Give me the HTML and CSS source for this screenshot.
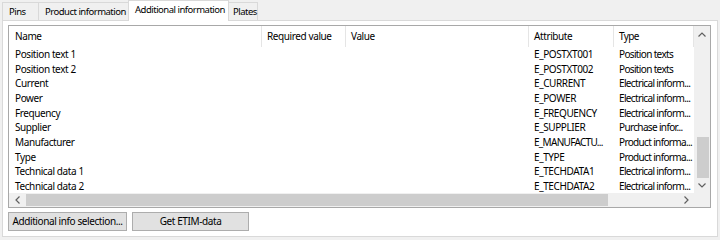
FILE: index.html
```html
<!DOCTYPE html>
<html>
<head>
<meta charset="utf-8">
<link rel="stylesheet" href="styles.css">
</head>
<body>
<div class="tabs">
  <div class="tab t1">Pins</div>
  <div class="tab t2">Product information</div>
  <div class="tab t3 active">Additional information</div>
  <div class="tab t4 last">Plates</div>
</div>
<div class="panel">
  <div class="list">
    <div class="viewport">
      <div class="row header">
        <div class="c c1">Name</div>
        <div class="c c2">Required value</div>
        <div class="c c3">Value</div>
        <div class="c c4">Attribute</div>
        <div class="c c5">Type</div>
      </div>
      <div class="row"><div class="c c1">Position text 1</div><div class="c c2"></div><div class="c c3"></div><div class="c c4">E_POSTXT001</div><div class="c c5">Position texts</div></div>
      <div class="row"><div class="c c1">Position text 2</div><div class="c c2"></div><div class="c c3"></div><div class="c c4">E_POSTXT002</div><div class="c c5">Position texts</div></div>
      <div class="row"><div class="c c1">Current</div><div class="c c2"></div><div class="c c3"></div><div class="c c4">E_CURRENT</div><div class="c c5">Electrical inform...</div></div>
      <div class="row"><div class="c c1">Power</div><div class="c c2"></div><div class="c c3"></div><div class="c c4">E_POWER</div><div class="c c5">Electrical inform...</div></div>
      <div class="row"><div class="c c1">Frequency</div><div class="c c2"></div><div class="c c3"></div><div class="c c4">E_FREQUENCY</div><div class="c c5">Electrical inform...</div></div>
      <div class="row"><div class="c c1">Supplier</div><div class="c c2"></div><div class="c c3"></div><div class="c c4">E_SUPPLIER</div><div class="c c5">Purchase infor...</div></div>
      <div class="row"><div class="c c1">Manufacturer</div><div class="c c2"></div><div class="c c3"></div><div class="c c4 tight">E_MANUFACTU...</div><div class="c c5">Product informa...</div></div>
      <div class="row"><div class="c c1">Type</div><div class="c c2"></div><div class="c c3"></div><div class="c c4">E_TYPE</div><div class="c c5">Product informa...</div></div>
      <div class="row"><div class="c c1">Technical data 1</div><div class="c c2"></div><div class="c c3"></div><div class="c c4">E_TECHDATA1</div><div class="c c5">Electrical inform...</div></div>
      <div class="row"><div class="c c1">Technical data 2</div><div class="c c2"></div><div class="c c3"></div><div class="c c4">E_TECHDATA2</div><div class="c c5">Electrical inform...</div></div>
    </div>
    <div class="vscroll">
      <div class="arrow"><svg width="8" height="5" viewBox="0 0 8 5"><polyline points="0.5,4.5 4,1 7.5,4.5" fill="none" stroke="#606060" stroke-width="1.2"/></svg></div>
      <div class="vtrack"><div class="vthumb"></div></div>
      <div class="arrow"><svg width="8" height="5" viewBox="0 0 8 5"><polyline points="0.5,0.5 4,4 7.5,0.5" fill="none" stroke="#606060" stroke-width="1.2"/></svg></div>
    </div>
    <div class="hscroll">
      <div class="harrow"><svg width="5" height="8" viewBox="0 0 5 8"><polyline points="4.5,0.5 1,4 4.5,7.5" fill="none" stroke="#606060" stroke-width="1.2"/></svg></div>
      <div class="htrack"><div class="hthumb"></div></div>
      <div class="harrow"><svg width="5" height="8" viewBox="0 0 5 8"><polyline points="0.5,0.5 4,4 0.5,7.5" fill="none" stroke="#606060" stroke-width="1.2"/></svg></div>
    </div>
    <div class="corner"></div>
  </div>
  <div class="buttons">
    <div class="btn b1">Additional info selection...</div>
    <div class="btn b2">Get ETIM-data</div>
  </div>
</div>
</body>
</html>
```
FILE: styles.css
```css
* { box-sizing: border-box; }
html, body { margin: 0; padding: 0; }
body {
  width: 720px;
  height: 240px;
  background: #f0f0f0;
  font-family: "Noto Sans", "Open Sans", sans-serif;
  font-size: 10px;
  letter-spacing: -0.4px;
  color: #000;
  overflow: hidden;
}
.tabs {
  display: flex;
  align-items: flex-end;
  height: 20px;
  padding-left: 2px;
  position: relative;
  z-index: 1;
}
.tab {
  flex: none;
  height: 18px;
  line-height: 17px;
  padding: 0 0 0 6px;
  border: 1px solid #d9d9d9;
  border-right: none;
  border-bottom: none;
  background: #f0f0f0;
  white-space: nowrap;
  font-size: 9.5px;
  letter-spacing: -0.5px;
}
.t1 { width: 36px; }
.t2 { width: 90px; }
.t3 { width: 101px; }
.t4 { width: 29px; padding-left: 4px; }
.tab.last { border-right: 1px solid #d9d9d9; }
.tab.active {
  height: 21px;
  line-height: 18px;
  margin-bottom: -1px;
  background: #fff;
  border-right: 1px solid #d9d9d9;
}
.tab.active + .tab { border-left: none; }
.panel {
  margin: 0 2px;
  height: 217px;
  background: #fff;
  border: 1px solid #d9d9d9;
  padding: 4px 0 0 5px;
}
.list {
  width: 703px;
  height: 183px;
  border: 1px solid #a8a8a8;
  display: grid;
  grid-template-columns: 685px 16px;
  grid-template-rows: 167px 14px;
  background: #fff;
}
.viewport {
  overflow: hidden;
}
.row {
  display: flex;
  height: 14.67px;
  line-height: 14.67px;
  white-space: nowrap;
}
.row.header {
  height: 21px;
  line-height: 21px;
}
.c {
  flex: none;
  overflow: hidden;
  padding-left: 5px;
}
.header .c { border-right: 1px solid #e5e5e5; }
.c1 { width: 253px; padding-left: 6px; }
.c2 { width: 84px; }
.c3 { width: 183px; }
.c4 { width: 85px; }
.c5 { width: 80px; letter-spacing: -0.65px; }
.tight { letter-spacing: -0.7px; }
.vscroll {
  background: #f0f0f0;
  display: flex;
  flex-direction: column;
}
.arrow {
  height: 16px;
  display: flex;
  align-items: center;
  justify-content: center;
  flex: none;
}
.vtrack {
  flex: 1;
  position: relative;
}
.vthumb {
  position: absolute;
  left: 3px;
  right: 1px;
  top: 95px;
  height: 41px;
  background: #cdcdcd;
}
.hscroll {
  background: #f0f0f0;
  display: flex;
}
.harrow {
  width: 16px;
  display: flex;
  align-items: center;
  justify-content: center;
  flex: none;
}
.htrack {
  flex: 1;
  position: relative;
}
.hthumb {
  position: absolute;
  top: 1px;
  bottom: 1px;
  left: 1px;
  width: 582px;
  background: #cdcdcd;
}
.corner { background: #f0f0f0; }
.buttons {
  display: flex;
  gap: 5px;
  margin-top: 4px;
}
.btn {
  height: 19px;
  line-height: 17px;
  background: #e1e1e1;
  border: 1px solid #adadad;
  text-align: center;
  white-space: nowrap;
  overflow: hidden;
}
.b1 { width: 119px; }
.b2 { width: 117px; }
```
